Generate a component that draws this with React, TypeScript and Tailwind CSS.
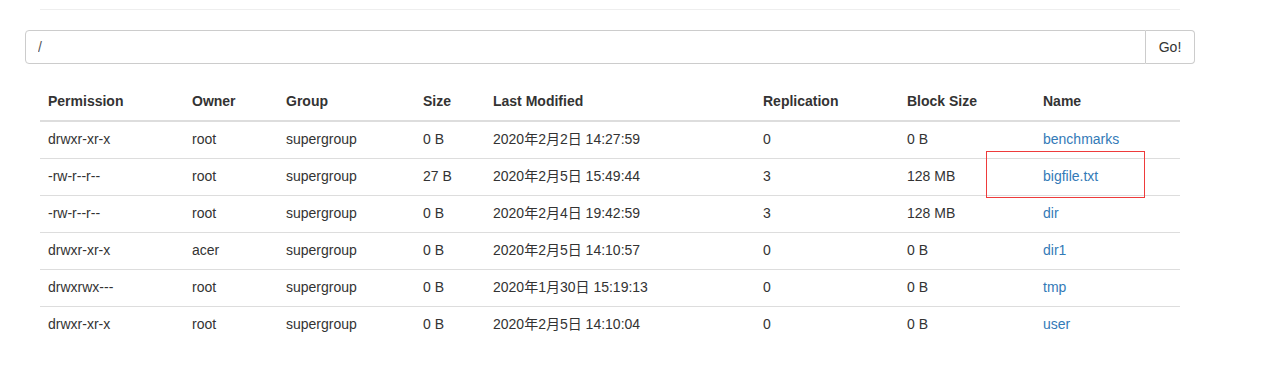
import React, { useState } from "react";

type Row = {
  permission: string;
  owner: string;
  group: string;
  size: string;
  modified: string;
  replication: string;
  blockSize: string;
  name: string;
};

const rows: Row[] = [
  { permission: "drwxr-xr-x", owner: "root", group: "supergroup", size: "0 B", modified: "2020年2月2日 14:27:59", replication: "0", blockSize: "0 B", name: "benchmarks" },
  { permission: "-rw-r--r--", owner: "root", group: "supergroup", size: "27 B", modified: "2020年2月5日 15:49:44", replication: "3", blockSize: "128 MB", name: "bigfile.txt" },
  { permission: "-rw-r--r--", owner: "root", group: "supergroup", size: "0 B", modified: "2020年2月4日 19:42:59", replication: "3", blockSize: "128 MB", name: "dir" },
  { permission: "drwxr-xr-x", owner: "acer", group: "supergroup", size: "0 B", modified: "2020年2月5日 14:10:57", replication: "0", blockSize: "0 B", name: "dir1" },
  { permission: "drwxrwx---", owner: "root", group: "supergroup", size: "0 B", modified: "2020年1月30日 15:19:13", replication: "0", blockSize: "0 B", name: "tmp" },
  { permission: "drwxr-xr-x", owner: "root", group: "supergroup", size: "0 B", modified: "2020年2月5日 14:10:04", replication: "0", blockSize: "0 B", name: "user" },
];

const columns = [
  { label: "Permission", w: "w-[144px]" },
  { label: "Owner", w: "w-[94px]" },
  { label: "Group", w: "w-[137px]" },
  { label: "Size", w: "w-[70px]" },
  { label: "Last Modified", w: "w-[270px]" },
  { label: "Replication", w: "w-[144px]" },
  { label: "Block Size", w: "w-[136px]" },
  { label: "Name", w: "w-[145px]" },
];

export default function App() {
  const [path, setPath] = useState("/");

  return (
    <div
      className="w-[1268px] h-[378px] bg-white text-[14px] leading-[20px] text-[#333] px-[25px] pt-[9px]"
      style={{ fontFamily: "'Liberation Sans', 'Noto Sans CJK SC', Arial, sans-serif" }}
    >
      <div className="w-[1170px]">
        <div className="mx-[15px] border-t border-[#eee]" />

        {/* path bar */}
        <div className="mt-[20px] flex h-[34px] w-[1170px]">
          <input
            value={path}
            onChange={(e) => setPath(e.target.value)}
            className="flex-1 h-full border border-[#ccc] rounded-l-[4px] px-[12px] text-[14px] text-[#555] outline-none"
          />
          <button className="h-full w-[49px] border border-l-0 border-[#ccc] rounded-r-[4px] bg-white text-[14px] text-[#333]">
            Go!
          </button>
        </div>

        {/* file listing */}
        <div className="relative mx-[15px] mt-[19px]">
          <table className="w-[1140px] table-fixed border-collapse">
            <thead>
              <tr className="border-b-2 border-[#ddd]">
                {columns.map((c) => (
                  <th key={c.label} className={`${c.w} px-[8px] pt-[8px] pb-[9px] text-left font-bold`}>
                    {c.label}
                  </th>
                ))}
              </tr>
            </thead>
            <tbody>
              {rows.map((r, i) => (
                <tr key={r.name} className={i > 0 ? "border-t border-[#ddd]" : ""}>
                  <td className="px-[8px] pt-[7px] pb-[9px]">{r.permission}</td>
                  <td className="px-[8px] pt-[7px] pb-[9px]">{r.owner}</td>
                  <td className="px-[8px] pt-[7px] pb-[9px]">{r.group}</td>
                  <td className="px-[8px] pt-[7px] pb-[9px]">{r.size}</td>
                  <td className="px-[8px] pt-[7px] pb-[9px] whitespace-nowrap">{r.modified}</td>
                  <td className="px-[8px] pt-[7px] pb-[9px]">{r.replication}</td>
                  <td className="px-[8px] pt-[7px] pb-[9px]">{r.blockSize}</td>
                  <td className="px-[8px] pt-[7px] pb-[9px]">
                    <a href="#" className="text-[#337ab7]">
                      {r.name}
                    </a>
                  </td>
                </tr>
              ))}
            </tbody>
          </table>

          {/* red highlight drawn over the screenshot */}
          <div className="absolute left-[946px] top-[68px] w-[159px] h-[47px] border border-[#ee3b3b] pointer-events-none" />
        </div>
      </div>
    </div>
  );
}
